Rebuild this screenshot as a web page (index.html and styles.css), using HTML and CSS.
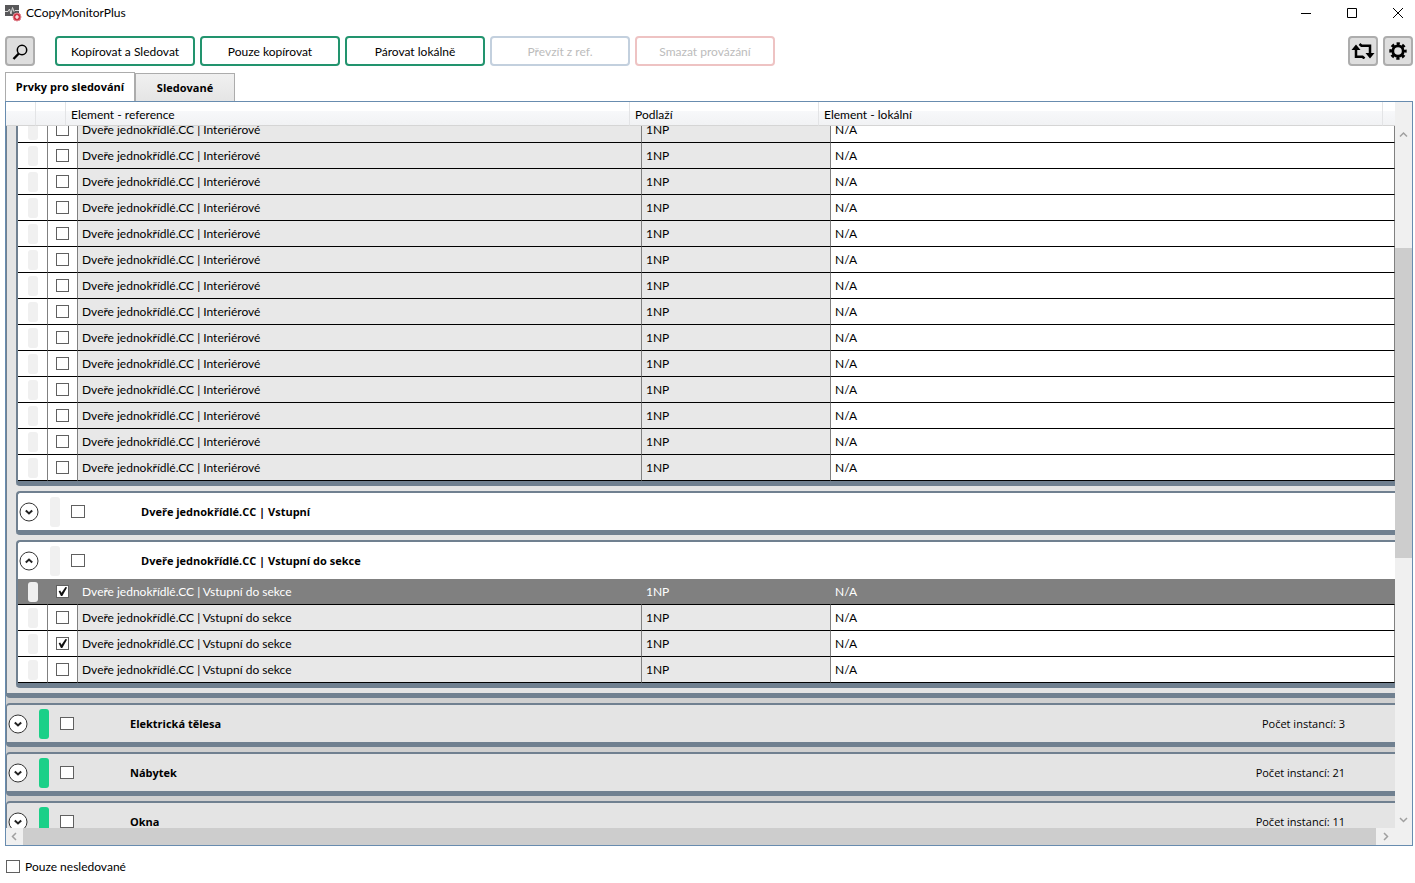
FILE: index.html
```
<!DOCTYPE html>
<html lang="cs">
<head>
    <meta charset="UTF-8">
    <meta name="viewport" content="width=device-width, initial-scale=1.0">
    <title>CCopyMonitorPlus</title>
    <link rel="stylesheet" href="styles.css">
</head>
<body>
    <header class="titlebar">
        <svg class="app-icon" width="17" height="17" viewBox="0 0 17 17">
            <rect x="0" y="0" width="14" height="11" fill="#58585a"/>
            <path d="M0 6.500h3l1.500-2.500 1.500 5 1.500-6.500 1.500 4 1-1h4" fill="none" stroke="#d8d8d8" stroke-width="1"/>
            <circle cx="12" cy="12" r="4" fill="#cf3344" stroke="#e08a94"/>
            <path d="M12 10v4M10 12h4" stroke="#fff" stroke-width="1.200"/>
        </svg>
        <h1>CCopyMonitorPlus</h1>
        <div class="window-buttons">
            <button aria-label="Minimalizovat"><svg width="12" height="12" viewBox="0 0 12 12"><path d="M1 6.500h10" stroke="#000"/></svg></button>
            <button aria-label="Maximalizovat"><svg width="12" height="12" viewBox="0 0 12 12"><path d="M1.500 1.500h9v9h-9z" fill="none" stroke="#000"/></svg></button>
            <button aria-label="Zavřít"><svg width="12" height="12" viewBox="0 0 12 12"><path d="M1 1l10 10M11 1L1 11" stroke="#000"/></svg></button>
        </div>
    </header>

    <div class="toolbar">
        <button class="icon-btn search-btn" aria-label="Hledat">
            <svg width="18" height="18" viewBox="0 0 18 18"><circle cx="11" cy="8" r="4.700" fill="none" stroke="#000" stroke-width="1.500"/><path d="M7.800 11.500L2.500 17" stroke="#000" stroke-width="2.400"/></svg>
        </button>
        <button class="btn">Kopírovat a Sledovat</button>
        <button class="btn">Pouze kopírovat</button>
        <button class="btn">Párovat lokálně</button>
        <button class="btn btn-blue" disabled>Převzít z ref.</button>
        <button class="btn btn-red" disabled>Smazat provázání</button>
        <div class="toolbar-right">
            <button class="icon-btn" aria-label="Obnovit">
                <svg width="24" height="16" viewBox="0 0 24 16"><path d="M5 5v8.700h6.500l2 1.800M8.500 1l2 1.800H19V11" fill="none" stroke="#000" stroke-width="2.500"/><path d="M0.500 7L5 1.500 9.500 7zM14.500 10h9L19 15.500z"/></svg>
            </button>
            <button class="icon-btn" aria-label="Nastavení">
                <svg width="18" height="18" viewBox="0 0 18 18"><circle cx="9" cy="9" r="5.200" fill="none" stroke="#000" stroke-width="2.800"/><circle cx="9" cy="9" r="7.300" fill="none" stroke="#000" stroke-width="2.800" stroke-dasharray="3.200 2.533" stroke-dashoffset="1.600"/></svg>
            </button>
        </div>
    </div>

    <nav class="tabs">
        <button class="tab active">Prvky pro sledování</button>
        <button class="tab">Sledované</button>
    </nav>

    <main class="grid">
        <div class="grid-main">
            <div class="grid-left">
                <table class="grid-head">
                    <colgroup><col class="c-mark"><col class="c-check"><col class="c-ref"><col class="c-level"><col class="c-local"><col></colgroup>
                    <thead>
                        <tr><th></th><th></th><th>Element - reference</th><th>Podlaží</th><th>Element - lokální</th><th></th></tr>
                    </thead>
                </table>
                <div class="viewport">
                    <div class="content">
                        <section class="category open">
                            <section class="family first">
                                <table class="rows" id="interierove">
                                    <colgroup><col class="c-mark"><col class="c-check"><col class="c-ref"><col class="c-level"><col></colgroup>
                                    <tbody></tbody>
                                </table>
                            </section>
                            <section class="family">
                                <div class="group-head">
                                    <button class="expander" aria-label="Rozbalit"><svg width="20" height="20" viewBox="0 0 20 20"><circle cx="10" cy="10" r="9" fill="#fff" stroke="#333"/><path d="M6.800 8.500L10 11.500l3.200-3" fill="none" stroke="#222" stroke-width="2"/></svg></button>
                                    <span class="mark"></span>
                                    <input type="checkbox" id="g-vstupni">
                                    <label for="g-vstupni">Dveře jednokřídlé.CC | Vstupní</label>
                                </div>
                            </section>
                            <section class="family">
                                <div class="group-head">
                                    <button class="expander" aria-label="Sbalit"><svg width="20" height="20" viewBox="0 0 20 20"><circle cx="10" cy="10" r="9" fill="#fff" stroke="#333"/><path d="M6.800 11.500L10 8.500l3.200 3" fill="none" stroke="#222" stroke-width="2"/></svg></button>
                                    <span class="mark"></span>
                                    <input type="checkbox" id="g-sekce">
                                    <label for="g-sekce">Dveře jednokřídlé.CC | Vstupní do sekce</label>
                                </div>
                                <table class="rows" id="sekce">
                                    <colgroup><col class="c-mark"><col class="c-check"><col class="c-ref"><col class="c-level"><col></colgroup>
                                    <tbody></tbody>
                                </table>
                            </section>
                        </section>
                        <section class="category">
                            <div class="group-head">
                                <button class="expander" aria-label="Rozbalit"><svg width="20" height="20" viewBox="0 0 20 20"><circle cx="10" cy="10" r="9" fill="#fff" stroke="#333"/><path d="M6.800 8.500L10 11.500l3.200-3" fill="none" stroke="#222" stroke-width="2"/></svg></button>
                                <span class="mark green"></span>
                                <input type="checkbox" id="g-elektro">
                                <label for="g-elektro">Elektrická tělesa</label>
                                <span class="count">Počet instancí: 3</span>
                            </div>
                        </section>
                        <section class="category">
                            <div class="group-head">
                                <button class="expander" aria-label="Rozbalit"><svg width="20" height="20" viewBox="0 0 20 20"><circle cx="10" cy="10" r="9" fill="#fff" stroke="#333"/><path d="M6.800 8.500L10 11.500l3.200-3" fill="none" stroke="#222" stroke-width="2"/></svg></button>
                                <span class="mark green"></span>
                                <input type="checkbox" id="g-nabytek">
                                <label for="g-nabytek">Nábytek</label>
                                <span class="count">Počet instancí: 21</span>
                            </div>
                        </section>
                        <section class="category">
                            <div class="group-head">
                                <button class="expander" aria-label="Rozbalit"><svg width="20" height="20" viewBox="0 0 20 20"><circle cx="10" cy="10" r="9" fill="#fff" stroke="#333"/><path d="M6.800 8.500L10 11.500l3.200-3" fill="none" stroke="#222" stroke-width="2"/></svg></button>
                                <span class="mark green"></span>
                                <input type="checkbox" id="g-okna">
                                <label for="g-okna">Okna</label>
                                <span class="count">Počet instancí: 11</span>
                            </div>
                        </section>
                    </div>
                </div>
            </div>
            <div class="vscroll">
                <button aria-label="Nahoru"><svg width="9" height="9" viewBox="0 0 9 9"><path d="M1 6.500L4.500 3 8 6.500" fill="none" stroke="#a0a0a0" stroke-width="1.500"/></svg></button>
                <div class="vtrack">
                    <div class="vthumb"></div>
                </div>
                <button aria-label="Dolů"><svg width="9" height="9" viewBox="0 0 9 9"><path d="M1 3l3.500 3.500L8 3" fill="none" stroke="#a0a0a0" stroke-width="1.500"/></svg></button>
            </div>
        </div>
        <div class="hscroll">
            <button aria-label="Doleva"><svg width="9" height="9" viewBox="0 0 9 9"><path d="M6 1L2.500 4.500 6 8" fill="none" stroke="#a0a0a0" stroke-width="1.500"/></svg></button>
            <div class="hthumb"></div>
            <button aria-label="Doprava"><svg width="9" height="9" viewBox="0 0 9 9"><path d="M3 1l3.500 3.500L3 8" fill="none" stroke="#a0a0a0" stroke-width="1.500"/></svg></button>
        </div>
    </main>

    <footer class="footer">
        <input type="checkbox" id="pouzeNesledovane">
        <label for="pouzeNesledovane">Pouze nesledované</label>
    </footer>

    <script>
        function renderRows(tableId, name, count, checked, selected) {
            const tbody = document.getElementById(tableId).querySelector('tbody');
            for (let i = 0; i < count; i++) {
                const row = tbody.insertRow();
                if (i === selected) {
                    row.className = 'selected';
                }
                row.insertCell().innerHTML = '<span class="mark"></span>';

                const check = document.createElement('input');
                check.type = 'checkbox';
                check.checked = checked.includes(i);
                check.setAttribute('aria-label', name);
                row.insertCell().appendChild(check);

                row.insertCell().textContent = name;
                row.insertCell().textContent = '1NP';
                row.insertCell().textContent = 'N/A';
            }
        }

        renderRows('interierove', 'Dveře jednokřídlé.CC | Interiérové', 14, [], -1);
        renderRows('sekce', 'Dveře jednokřídlé.CC | Vstupní do sekce', 4, [0, 2], 0);
    </script>
</body>
</html>
```
FILE: styles.css
```
* {
    box-sizing: border-box;
}

body {
    display: flex;
    flex-direction: column;
    height: 100vh;
    margin: 0;
    overflow: hidden;
    background: #fff;
    color: #000;
    font-family: Lato, "Open Sans", sans-serif;
    font-size: 12px;
    line-height: 16px;
}

button {
    padding: 0;
    border: none;
    background: none;
    color: inherit;
    font: inherit;
}

svg {
    display: block;
}

/* title bar */
.titlebar {
    display: flex;
    align-items: center;
    height: 26px;
    padding-left: 5px;
}

.titlebar h1 {
    margin: 0 0 0 4px;
    font-size: 12px;
    font-weight: normal;
}

.window-buttons {
    display: flex;
    margin-left: auto;
}

.window-buttons button {
    display: flex;
    align-items: center;
    justify-content: center;
    width: 46px;
    height: 24px;
}

.window-buttons button:last-child {
    width: 34px;
    margin-left: 6px;
}

/* toolbar */
.toolbar {
    display: flex;
    gap: 5px;
    margin-top: 10px;
    padding: 0 2px 0 5px;
}

.icon-btn {
    display: flex;
    align-items: center;
    justify-content: center;
    width: 30px;
    height: 30px;
    border: 2px solid #adadad;
    border-radius: 4px;
    background: #dedede;
}

.search-btn {
    margin-right: 15px;
}

.btn {
    width: 140px;
    height: 30px;
    padding-top: 2px;
    border: 2px solid #22946e;
    border-radius: 4px;
    background: #fff;
}

.btn:disabled {
    color: #bcbcbc;
}

.btn-blue {
    border-color: #c3d0de;
}

.btn-red {
    border-color: #eec3c3;
}

.toolbar-right {
    display: flex;
    gap: 5px;
    margin-left: auto;
}

/* tabs */
.tabs {
    display: flex;
    align-items: flex-end;
    margin-top: 6px;
    padding-left: 5px;
}

.tab {
    width: 100px;
    height: 28px;
    border: 1px solid #acacac;
    border-bottom: none;
    background: linear-gradient(#f0f0f0, #e5e5e5);
    font-family: "Open Sans", sans-serif;
    font-size: 11px;
    font-weight: bold;
}

.tab.active {
    width: 130px;
    height: 29px;
    background: #fff;
}

/* data grid */
.grid {
    display: flex;
    flex: 1;
    flex-direction: column;
    min-height: 0;
    margin: 0 2px 0 5px;
    border: 1px solid #688caf;
    background: #f0f0f0;
}

.grid-main {
    display: flex;
    flex: 1;
    min-height: 0;
}

.grid-left {
    display: flex;
    flex: 1;
    flex-direction: column;
    min-width: 0;
}

table {
    width: 100%;
    border-spacing: 0;
    table-layout: fixed;
}

.c-mark, .c-check {
    width: 30px;
}

.c-ref, .c-local {
    width: 564px;
}

.c-level {
    width: 189px;
}

.grid-head th {
    height: 24px;
    padding: 2px 5px 0;
    border-right: 1px solid #e3e4e6;
    border-bottom: 1px solid #d5d5d5;
    background: linear-gradient(#fff 40%, #f7f8fa 41%, #f1f2f4);
    font-weight: normal;
    text-align: left;
}

.grid-head th:last-child {
    border-right: none;
}

.viewport {
    flex: 1;
    min-height: 0;
    overflow: hidden;
    background: #d0d0d0;
}

/* list scrolled part way into the first visible row */
.content {
    margin-top: -9px;
}

.category {
    margin-bottom: 5px;
    border: 2px solid #708090;
    border-left-width: 1px;
    border-right: none;
    border-bottom-width: 5px;
    border-radius: 4px 0 0 4px;
    background: #e4e4e4;
}

.category.open {
    padding: 0 0 5px 9px;
    border-top: none;
}

.family {
    margin-top: 5px;
    border: 2px solid #708090;
    border-right: none;
    border-bottom-width: 5px;
    border-radius: 4px 0 0 4px;
    background: #fff;
}

.family.first {
    margin-top: 0;
    border-top: none;
}

.group-head {
    display: flex;
    align-items: center;
    height: 37px;
    padding: 0 50px 0 1px;
    font-family: "Open Sans", sans-serif;
    font-size: 11px;
    font-weight: bold;
}

.group-head .mark {
    width: 10px;
    height: 30px;
    margin: 0 11px;
}

.group-head label {
    margin-left: 56px;
}

.expander {
    width: 20px;
}

.count {
    margin-left: auto;
    font-weight: normal;
}

.mark {
    display: block;
    width: 10px;
    height: 20px;
    margin: 0 auto;
    border-radius: 3px;
    background: #f0f0f0;
}

.mark.green {
    background: #1bd088;
}

.rows td {
    height: 26px;
    padding: 0 4px;
    border-right: 1px solid #808080;
    border-bottom: 1px solid #000;
}

.rows td:nth-child(2) input {
    margin: 0 auto;
}

.rows td:nth-child(3), .rows td:nth-child(4) {
    background: #e8e8e8;
}

.rows .selected td {
    background: #808080;
    color: #fff;
}

/* check boxes */
input[type="checkbox"] {
    display: block;
    flex: none;
    width: 13px;
    height: 13px;
    margin: 0;
    border: 1px solid #606060;
    background: #fff;
    appearance: none;
}

.group-head input[type="checkbox"], .footer input[type="checkbox"] {
    width: 14px;
}

input[type="checkbox"]:checked::before {
    content: "";
    display: block;
    height: 11px;
    background: #111;
    clip-path: polygon(15% 48%, 29% 42%, 41% 62%, 77% 10%, 92% 14%, 48% 90%, 36% 90%);
}

/* scroll bars */
.vscroll {
    display: flex;
    flex-direction: column;
    width: 17px;
    padding-top: 24px;
}

.vscroll button, .hscroll button {
    display: flex;
    align-items: center;
    justify-content: center;
    width: 17px;
    height: 17px;
}

.vtrack {
    flex: 1;
    padding-top: 105px;
}

.vthumb {
    height: 55%;
    background: #cdcdcd;
}

.hscroll {
    display: flex;
    padding-right: 17px;
}

.hscroll button:last-child {
    width: 19px;
}

.hthumb {
    flex: 1;
    background: #cdcdcd;
}

/* footer */
.footer {
    display: flex;
    align-items: center;
    gap: 5px;
    height: 37px;
    padding: 4px 0 0 6px;
}
```
